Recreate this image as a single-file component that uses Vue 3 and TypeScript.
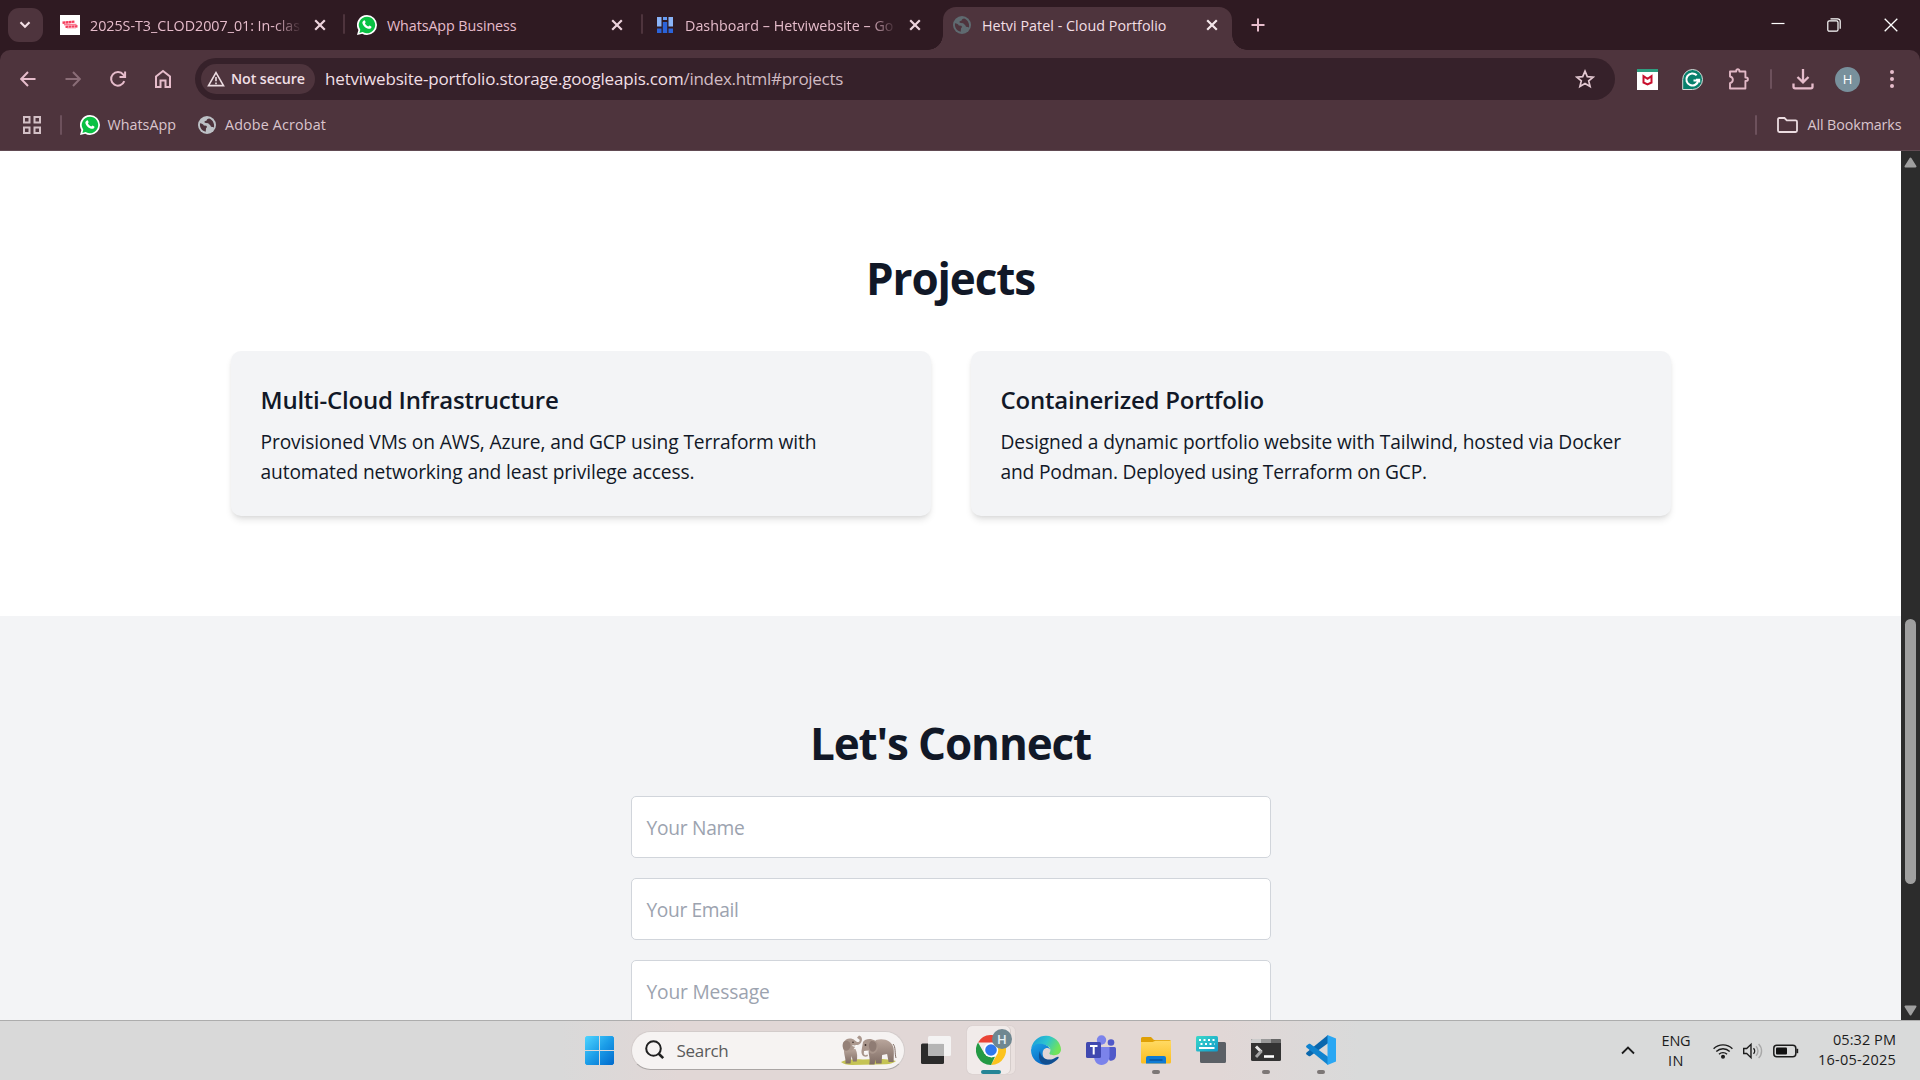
<script setup lang="ts">
import type { Directive } from 'vue'

interface Project {
  title: string
  titleWidth: number
  lines: { text: string; width: number }[]
}

const projects: Project[] = [
  {
    title: 'Multi-Cloud Infrastructure',
    titleWidth: 298,
    lines: [
      { text: 'Provisioned VMs on AWS, Azure, and GCP using Terraform with', width: 556 },
      { text: 'automated networking and least privilege access.', width: 434 },
    ],
  },
  {
    title: 'Containerized Portfolio',
    titleWidth: 263.5,
    lines: [
      { text: 'Designed a dynamic portfolio website with Tailwind, hosted via Docker', width: 620.5 },
      { text: 'and Podman. Deployed using Terraform on GCP.', width: 426.5 },
    ],
  },
]

const fields = [
  { label: 'Your Name', width: 98 },
  { label: 'Your Email', width: 92 },
  { label: 'Your Message', width: 123 },
]

// Tracks a line of text so that it spans the given width in pixels.
const vFit: Directive<HTMLElement, number> = {
  mounted(el, { value }) {
    const natural = el.getBoundingClientRect().width
    const count = (el.textContent ?? '').trim().length
    if (count) el.style.letterSpacing = `${(value - natural) / count}px`
  },
}
</script>

<template>
  <div class="screen">
    <!-- Tab strip -->
    <header class="tabs">
      <button class="tab-search">
        <svg width="12" height="8" viewBox="0 0 12 8"><path d="M1.500 1.200 6 5.700l4.500-4.500" fill="none" stroke="#f3dfe5" stroke-width="2.200" /></svg>
      </button>
      <div class="tab">
        <svg class="fav" width="20" height="20" viewBox="0 0 20 20">
          <rect width="20" height="20" fill="#fff" />
          <path d="M2.500 7.800 14.500 6.600M5.500 11.900l12-.6" stroke="#f43f5e" stroke-width="2.400" stroke-dasharray="2.700 .4" fill="none" />
          <path d="M4 9.600h12.500" stroke="#fb7c93" stroke-width="1.600" /><path d="M7 13.100h9" stroke="#fda4b4" stroke-width=".8" />
        </svg>
        <div class="title clip"><span v-fit="210" class="t">2025S-T3_CLOD2007_01: In-clas</span></div>
        <svg class="x" width="12" height="12" viewBox="0 0 12 12"><path d="m1.200 1.200 9.600 9.600m0-9.600-9.600 9.600" /></svg>
        <i class="tab-sep"></i>
      </div>
      <div class="tab">
        <svg class="fav wa" width="20" height="20" viewBox="0 0 20 20"><use href="#wa" /></svg>
        <div class="title"><span v-fit="129.500" class="t">WhatsApp Business</span></div>
        <svg class="x" width="12" height="12" viewBox="0 0 12 12"><path d="m1.200 1.200 9.600 9.600m0-9.600-9.600 9.600" /></svg>
        <i class="tab-sep"></i>
      </div>
      <div class="tab">
        <svg class="fav" width="20" height="20" viewBox="0 0 20 20">
          <path d="M2 2h4.500v9.500H2zM13.500 2H18v9.500h-4.500z" fill="#8ab4f8" /><path d="M8 2h4v3H8z" fill="#669df6" />
          <path d="M7.800 7h4.400v11H7.800zM2 13.500h4.500V18H2zM13.500 13.500H18V18h-4.500z" fill="#2b63d9" />
        </svg>
        <div class="title clip"><span v-fit="208.500" class="t">Dashboard – Hetviwebsite – Go</span></div>
        <svg class="x" width="12" height="12" viewBox="0 0 12 12"><path d="m1.200 1.200 9.600 9.600m0-9.600-9.600 9.600" /></svg>
      </div>
      <div class="tab active">
        <svg class="fav" width="20" height="20" viewBox="0 0 20 20" color="#5f6a70"><use href="#globe" /></svg>
        <div class="title"><span v-fit="184.500" class="t">Hetvi Patel - Cloud Portfolio</span></div>
        <svg class="x" width="12" height="12" viewBox="0 0 12 12"><path d="m1.200 1.200 9.600 9.600m0-9.600-9.600 9.600" /></svg>
      </div>
      <svg class="plus" width="14" height="14" viewBox="0 0 14 14"><path d="M7 .5v13M.5 7h13" stroke="#e6bccb" stroke-width="2" /></svg>
      <div class="win">
        <svg width="14" height="14" viewBox="0 0 14 14"><path d="M.5 5.500h13" stroke="#fff" stroke-width="1.200" /></svg>
        <svg width="14" height="14" viewBox="0 0 14 14" fill="none" stroke="#fff" stroke-width="1.200"><rect x=".8" y="2.800" width="10.200" height="10.400" rx="1.500" /><path d="M3.500.8h7.200a2.500 2.500 0 0 1 2.500 2.500v7.500" /></svg>
        <svg width="14" height="14" viewBox="0 0 14 14"><path d="m.7.7 12.600 12.600m0-12.600L.7 13.300" stroke="#fff" stroke-width="1.300" /></svg>
      </div>
    </header>

    <!-- Address bar and bookmarks -->
    <section class="chrome">
      <div class="toolbar">
        <nav class="nav">
          <svg width="16" height="16" viewBox="0 0 16 16"><path d="M15.500 8H1.500M8 1 1.200 8 8 15" /></svg>
          <svg class="dim" width="16" height="16" viewBox="0 0 16 16"><path d="M.5 8h14M8 1l6.800 7L8 15" /></svg>
          <svg width="18" height="18" viewBox="0 0 18 18"><path d="M15.300 11.200A6.800 6.800 0 1 1 14.300 4.700L16 6.700M16.100 1.500v5.600h-5.600" /></svg>
          <svg width="18" height="20" viewBox="0 0 18 20"><path d="M2 7.500 9 2l7 5.500V18h-4.500v-6.500h-5V18H2z" /></svg>
        </nav>
        <div class="omnibox">
          <div class="chip">
            <svg width="18" height="16" viewBox="0 0 18 16"><path d="M9 1.700 16.500 14.600h-15z" fill="none" stroke="#ecdce1" stroke-width="1.600" /><path d="M9 6v4.300M9 11.500v1.700" stroke="#ecdce1" stroke-width="1.600" /></svg>
            <span v-fit="74" class="t secure">Not secure</span>
          </div>
          <div class="url"><span v-fit="358.500" class="t host">hetviwebsite-portfolio.storage.googleapis.com</span><span v-fit="159.500" class="t path">/index.html#projects</span></div>
          <svg class="star" width="20" height="20" viewBox="0 0 20 20"><path d="m10 2.200 2.300 5.400 5.900.5-4.500 3.800 1.400 5.700L10 14.600l-5.100 3 1.400-5.700-4.500-3.800 5.900-.5z" fill="none" stroke="#e3c8d1" stroke-width="1.700" /></svg>
        </div>
        <div class="ext">
          <svg width="21" height="21" viewBox="0 0 21 21"><rect width="21" height="21" fill="#fff" /><path d="M0 0h21v3H0z" fill="#2e9e80" /><path d="M6.500 7.200v6.300l4 1.800 4-1.800V7.200l-4 2.600z" fill="none" stroke="#c8102e" stroke-width="2" /></svg>
          <svg width="21" height="21" viewBox="0 0 21 21"><path d="M10.500.5a10 10 0 1 1 0 20H.7v-10a10 10 0 0 1 9.800-10z" fill="#07806c" stroke="#d6dcd9" /><path d="M14.700 6.300a6 6 0 1 0 1.600 5.200h-4.800" fill="none" stroke="#fff" stroke-width="2.100" /><path d="M14 10.500h3.400v3" fill="none" stroke="#fff" stroke-width="1.600" /></svg>
          <svg width="22" height="22" viewBox="0 0 22 22"><path d="M2 3.500h6.200v-.7a1.600 1.600 0 0 1 3.200 0v.7h6v6h.8a1.700 1.700 0 0 1 0 3.400h-.8v7.600H2v-5.400c3.800-.8 3.800-5.800 0-6.600z" fill="none" stroke="#e2b8c6" stroke-width="1.900" stroke-linejoin="round" /></svg>
          <i class="sep"></i>
          <svg width="22" height="22" viewBox="0 0 22 22"><path d="M11 1v13M5.500 9 11 14.300 16.500 9M1.500 15.500v3.200a1.600 1.600 0 0 0 1.600 1.600h15.800a1.600 1.600 0 0 0 1.600-1.600v-3.200" fill="none" stroke="#e6bccb" stroke-width="2.300" /></svg>
          <span class="avatar">H</span>
          <svg width="4" height="20" viewBox="0 0 4 20" fill="#e6bccb"><circle cx="2" cy="3" r="2" /><circle cx="2" cy="10" r="2" /><circle cx="2" cy="17" r="2" /></svg>
        </div>
      </div>
      <div class="bookmarks">
        <svg class="apps" width="18" height="18" viewBox="0 0 18 18" fill="none" stroke="#d3c0c6" stroke-width="2"><path d="M1 1h5.500v5.500H1zM11.500 1H17v5.500h-5.500zM1 11.500h5.500V17H1zM11.500 11.500H17V17h-5.500z" /></svg>
        <i class="sep"></i>
        <svg class="b-wa" width="20" height="20" viewBox="0 0 20 20">
          <g id="wa"><path d="M10 0a10 10 0 0 1 0 20 10 10 0 0 1-4.800-1.200L0 20l1.400-4.900A10 10 0 0 1 10 0z" fill="#fff" /><path d="M10 1.700a8.300 8.300 0 1 1-4.400 15.400l-3.200.8.9-3.100A8.300 8.300 0 0 1 10 1.700z" fill="#0ac143" /><path d="M6.900 5.400c.5-.4 1 0 1.200.5l.5 1.200c.2.500-.6 1-.6 1.300.7 1.400 1.900 2.500 3.300 3.100.4 0 .9-1 1.400-.9l1.500.8c.5.3.3 1-.1 1.500-1 1.200-2.400 1.100-3.700.6-2.300-.8-4.300-2.800-5-5.200-.3-1.200.5-2.200 1.500-2.900z" fill="#fff" /></g>
        </svg>
        <span v-fit="68.500" class="t">WhatsApp</span>
        <svg class="b-globe" width="20" height="20" viewBox="0 0 20 20" color="#bdc1c6">
          <g id="globe"><circle cx="10" cy="10" r="9" fill="currentColor" /><path d="M3 8.300c1.800.1 3.200.9 3.800 2.100l2.500.3c.9.500.8 1.900-.2 2.400l-.4 3.600c-3.500-.5-6.300-3.800-5.700-8.400zM12.300 3.400c-1.800.2-2.800 1-2.600 2.200l-2 .7c-.6.900 0 1.700 1.200 1.700l2.300.2c.8 1.100 2 1.300 2.200 2.400.2 1 .9 1.500 1.900 1.300 1-.1 1.400.3 1.400 1.200 1.300-3.600-.4-8-4.400-9.700z" fill="#4e343d" /></g>
        </svg>
        <span v-fit="101" class="t">Adobe Acrobat</span>
        <i class="sep push"></i>
        <svg class="folder" width="21" height="16" viewBox="0 0 21 16"><path d="M1 2.500A1.400 1.400 0 0 1 2.400 1h5.100l2.300 2.300h8.800A1.400 1.400 0 0 1 20 4.700v8.900a1.400 1.400 0 0 1-1.400 1.400H2.400A1.400 1.400 0 0 1 1 13.600z" fill="none" stroke="#ecdce1" stroke-width="1.800" /></svg>
        <span v-fit="94" class="t">All Bookmarks</span>
      </div>
    </section>

    <!-- Web page -->
    <div class="view">
      <main class="page">
        <section class="projects">
          <h2><span v-fit="169" class="t">Projects</span></h2>
          <div class="cards">
            <article v-for="p in projects" :key="p.title" class="card">
              <h3><span v-fit="p.titleWidth" class="t">{{ p.title }}</span></h3>
              <p v-for="l in p.lines" :key="l.text"><span v-fit="l.width" class="t">{{ l.text }}</span></p>
            </article>
          </div>
        </section>
        <section class="contact">
          <h2><span v-fit="281" class="t">Let's Connect</span></h2>
          <form>
            <div v-for="f in fields" :key="f.label" class="field"><span v-fit="f.width" class="t">{{ f.label }}</span></div>
          </form>
        </section>
      </main>
      <aside class="scroll">
        <svg width="13" height="11" viewBox="0 0 13 11"><path d="M6.500 1.500 11.500 9.500h-10z" fill="#9f9f9f" stroke="#9f9f9f" stroke-width="2" stroke-linejoin="round" /></svg>
        <div class="thumb"></div>
        <svg class="down" width="13" height="11" viewBox="0 0 13 11"><path d="M6.500 9.500 1.500 1.500h10z" fill="#9f9f9f" stroke="#9f9f9f" stroke-width="2" stroke-linejoin="round" /></svg>
      </aside>
    </div>

    <!-- Windows taskbar -->
    <footer class="taskbar">
      <div class="dock">
        <svg class="start" width="29" height="29" viewBox="0 0 29 29">
          <defs><linearGradient id="win" x1="0" y1="0" x2="29" y2="29" gradientUnits="userSpaceOnUse"><stop stop-color="#4fd5ff" /><stop offset=".5" stop-color="#1b9de8" /><stop offset="1" stop-color="#0069cc" /></linearGradient></defs>
          <path d="M1.500 0H14v14H0V1.500zM15 0h12.500L29 1.500V14H15zM0 15h14v14H1.500L0 27.500zM15 15h14v12.500L27.500 29H15z" fill="url(#win)" />
        </svg>
        <div class="search">
          <svg class="lens" width="20" height="20" viewBox="0 0 20 20"><circle cx="8.500" cy="8.500" r="7.300" fill="none" stroke="#202020" stroke-width="2" /><path d="m13.500 13.500 4.700 4.700" stroke="#202020" stroke-width="2.600" /></svg>
          <span v-fit="52" class="t">Search</span>
          <svg class="elephants" width="57" height="32" viewBox="0 0 57 32">
            <defs><linearGradient id="ele" x1="0" y1="0" x2="0" y2="1"><stop stop-color="#b9a69c" /><stop offset="1" stop-color="#7f6c64" /></linearGradient></defs>
            <path d="M1 28c5-3 14-3 22-2.500 12-.8 25-1 33 1.500-2 2-6 3-10 3.300L12 31C7 31 3 30 1 28z" fill="#c5c455" />
            <path d="M4 15h11.500c2 4 2 8 1.200 12.500H13L11.500 22l-1 7.500H5.500C6 24 3.500 20 4 15z" fill="url(#ele)" />
            <path d="M3.500 9C5 5 9 3.700 12.500 5c1.800.7 3.300 2 4.500 3 2 .2 3-.8 2.600-2.300L17 3.700 19 1.500c3.600.9 3.800 5.600 1.300 8-1.400 1.400-3 1.700-4.700 1.500-.5 2.500-1.800 4.500-3.800 5.500H4C2.800 14 2.700 11.500 3.500 9z" fill="#ab988e" />
            <path d="M4 7.500c3.500-2 7 .5 6.500 5-.6 3-4 5.500-6.300 3.500C2 13.500 2.200 9.500 4 7.500z" fill="#958178" />
            <path d="M36 6c8-2.500 16 1 17.500 8 .6 4 .3 8 .1 14h-5l-1.500-8-5 1-.5 8.500H36l-.5-4-1 5h-5.300c1.500-6-1-10-.5-14z" fill="url(#ele)" />
            <path d="M53 10c3 3 1.500 9 3 14" fill="none" stroke="#836f67" />
            <path d="M23 8c2-3.600 8-4 12-1.500 5 3 4 9 .5 12-3 2.600-6 1-6.500-2l-3.500.3c-2.500 1.200-2 4 0 4.500l2-.8.500 1.600c-4 2-7-1-6.500-5.300z" fill="#a9968c" />
            <path d="M31 7c5-.5 7 4 4.500 9-2 3-5 2-6-1s-1-6 1.500-8z" fill="#8f7c74" />
            <path d="M12.500 11.500c2 1 3.500.8 4.500 0M24 17.500l3 .5" stroke="#fff" stroke-width="1.200" fill="none" /><circle cx="13" cy="8.200" r=".8" fill="#3e302c" /><circle cx="25.500" cy="11" r=".9" fill="#3e302c" />
          </svg>
        </div>
        <svg class="taskview" width="30" height="28" viewBox="0 0 30 28"><rect y="7.500" width="23" height="20.500" rx="1.500" fill="#2b2b2b" /><rect x="7" width="23" height="20" rx="1.500" fill="#f5f5f5" opacity=".92" /><path d="M7 8h16v12H8.500A1.500 1.500 0 0 1 7 18.500z" fill="#b5b5b5" /></svg>
        <div class="app open">
          <svg width="30" height="30" viewBox="0 0 30 30">
            <path d="M2 7.500A15 15 0 0 1 28 7.500H15z" fill="#ea4335" /><path d="M2 7.500 8.500 18.700 15 22.500 15 30A15 15 0 0 1 2 7.500z" fill="#249a45" /><path d="M28 7.500A15 15 0 0 1 15 30L21.500 18.700 19 7.500z" fill="#fcc31e" /><path d="m8.500 18.700 6.500 3.800 4-.8L15 30z" fill="#249a45" />
            <circle cx="15" cy="15" r="7.300" fill="#fff" /><circle cx="15" cy="15" r="5.800" fill="#2f78ee" />
          </svg>
          <span class="badge">H</span><i class="run on"></i>
        </div>
        <div class="app">
          <svg width="30" height="30" viewBox="0 0 30 30">
            <defs><linearGradient id="e1" x1="0" y1="0" x2="1" y2=".4"><stop stop-color="#1997dc" /><stop offset=".55" stop-color="#2dc4cf" /><stop offset="1" stop-color="#71e35a" /></linearGradient><linearGradient id="e2" x1="0" y1="0" x2=".5" y2="1"><stop stop-color="#1da5e7" /><stop offset="1" stop-color="#0867c4" /></linearGradient></defs>
            <path d="M.2 13.500A15 15 0 0 1 30 14.500c0 3.500-3 5.700-6.500 5.700-3 0-5.600-1-5-2.300 1.700-2 1-5-1-6.400C12 8 3 8.500.2 13.500z" fill="url(#e1)" />
            <path d="M0 15C1 9.500 6.500 8 11.500 9c4 .8 7 3 7.500 5.500-1-2-4.500-2.400-6.400.3C9.500 20 14 27 21 28.500 12 32.500 0 27 0 15z" fill="url(#e2)" />
            <path d="M9 16c0 6.500 7 10 13 8 2.500-1 4.500-2.600 5.500-2 .7.500-.5 2-2 3.300C19.500 31 10.500 31.500 8.300 24 7.500 21 8 18 9 16z" fill="#104f91" />
          </svg>
        </div>
        <div class="app">
          <svg width="30" height="30" viewBox="0 0 30 30">
            <circle cx="25" cy="7.500" r="3.300" fill="#5059c9" /><path d="M19 12h9.500A1.500 1.500 0 0 1 30 13.500V20c0 4-3 6.500-6.500 5.500z" fill="#5059c9" /><circle cx="15.500" cy="5" r="4.700" fill="#7b83eb" /><path d="M8 12h15.500v9c0 5-3.500 9-8 9s-7.500-4-7.500-9z" fill="#7b83eb" /><rect y="7" width="15" height="16" rx="1.500" fill="#4048b0" /><path d="M4 11h7.500M7.700 11v8.500" stroke="#fff" stroke-width="2" />
          </svg>
        </div>
        <div class="app">
          <svg width="30" height="30" viewBox="0 0 30 30">
            <defs><linearGradient id="fo" x1="0" y1="0" x2="0" y2="1"><stop stop-color="#ffda64" /><stop offset="1" stop-color="#fbbd1f" /></linearGradient></defs>
            <path d="M0 3.500A1.500 1.500 0 0 1 1.500 2H10l3 3h15.500A1.500 1.500 0 0 1 30 6.500V9H0z" fill="#dfa006" /><path d="M0 7h11.500l3-1.200H30V27a1.500 1.500 0 0 1-1.500 1.500h-27A1.500 1.500 0 0 1 0 27z" fill="url(#fo)" /><path d="M5 28.500V23a2 2 0 0 1 2-2h16a2 2 0 0 1 2 2v5.500z" fill="#0f7bd4" /><path d="M8.500 25h13" stroke="#064b91" stroke-width="1.200" />
          </svg>
          <i class="run"></i>
        </div>
        <div class="app">
          <svg width="30" height="30" viewBox="0 0 30 30">
            <defs><linearGradient id="kb" x1="0" y1="0" x2="1" y2="1"><stop stop-color="#3ad9c9" /><stop offset="1" stop-color="#129acb" /></linearGradient></defs>
            <path d="M4 7h24.500A1.500 1.500 0 0 1 30 8.500v18a1.500 1.500 0 0 1-1.500 1.500h-23A1.500 1.500 0 0 1 4 26.500z" fill="#5b6066" /><rect y="1" width="22" height="15.500" rx="1.500" fill="url(#kb)" /><path d="M3 5h16M4.500 9h14" stroke="#fff" stroke-width="2" stroke-dasharray="2 2.500" /><path d="M3 13h15.500" stroke="#fff" stroke-width="2" />
          </svg>
        </div>
        <div class="app">
          <svg width="30" height="30" viewBox="0 0 30 30">
            <rect y="4" width="30" height="22" rx="1.500" fill="#333" /><path d="M0 8V5.500A1.500 1.500 0 0 1 1.500 4H10v4z" fill="#ccc" /><path d="M10 4h10v4H10z" fill="#999" /><path d="M20 4h8.500A1.500 1.500 0 0 1 30 5.500V8H20z" fill="#666" /><path d="m5 11.500 5.500 5.500" stroke="#e6e6e6" stroke-width="3" /><path d="M10.500 16 5 22" stroke="#a6a6a6" stroke-width="3" /><path d="M13 21.500h10" stroke="#fff" stroke-width="2.600" />
          </svg>
          <i class="run"></i>
        </div>
        <div class="app">
          <svg width="30" height="30" viewBox="0 0 30 30">
            <path d="M22 0 0.600 17.400c-.7.600-.7 1.400 0 2l2 1.500c.6.400 1.200.4 1.800 0L22 8.200z" fill="#0a67ad" /><path d="M22 30 .6 12.600c-.7-.6-.7-1.400 0-2l2-1.500c.6-.4 1.200-.4 1.800 0L22 21.800z" fill="#1083cf" /><path d="M21.500 0 30 3.500v23L21.500 30z" fill="#2aa7f3" />
          </svg>
          <i class="run"></i>
        </div>
      </div>
      <div class="tray">
        <svg class="chev" width="14" height="9" viewBox="0 0 14 9"><path d="M1 7.500 7 1.600l6 5.900" fill="none" stroke="#1c1c1c" stroke-width="1.800" /></svg>
        <div class="two lang"><span v-fit="29" class="t">ENG</span><span v-fit="16" class="t">IN</span></div>
        <svg class="wifi" width="20" height="16" viewBox="0 0 20 16" fill="none" stroke="#1c1c1c" stroke-width="1.400"><path d="M.6 5.800a13.200 13.200 0 0 1 18.800 0M3.300 8.600a9.400 9.400 0 0 1 13.400 0M6 11.300a5.600 5.600 0 0 1 8 0" /><circle cx="10" cy="13.800" r="1.300" fill="#1c1c1c" /></svg>
        <svg class="vol" width="20" height="18" viewBox="0 0 20 18" fill="none" stroke="#1c1c1c" stroke-width="1.400"><path d="M.7 6.500h3L8 2.300v13.400l-4.300-4.200h-3zM10.500 6.200a4 4 0 0 1 0 5.600" /><path d="M13 4.200a6.800 6.800 0 0 1 0 9.600M15.600 1.900a10 10 0 0 1 0 14.200" stroke="#a8a8a8" /></svg>
        <svg class="bat" width="26" height="14" viewBox="0 0 26 14"><rect x=".8" y="1.300" width="22" height="11.400" rx="3" fill="none" stroke="#1c1c1c" stroke-width="1.500" /><rect x="3" y="3.500" width="11" height="7" rx="1" fill="#111" /><path d="M24.300 4.800v4.400" stroke="#1c1c1c" stroke-width="1.800" /></svg>
        <div class="two clock"><span v-fit="63" class="t">05:32 PM</span><span v-fit="78" class="t">16-05-2025</span></div>
      </div>
    </footer>
  </div>
</template>

<style>
html, body { margin: 0; overflow: hidden; }
</style>

<style scoped>
.screen { display: flex; flex-direction: column; width: 1920px; height: 1080px; overflow: hidden; box-sizing: border-box; background: linear-gradient(#2f1a22 0 70px, #fff 70px); font-family: "Open Sans", "Noto Sans", sans-serif; color: #111827; }
svg { display: block; flex: none; }
.t { display: inline-block; white-space: pre; }

/* Tab strip */
.tabs { display: flex; height: 50px; background: #2f1a22; flex: none; font-size: 14.300px; color: #e6bccb; }
.tab-search { width: 35px; height: 34px; margin: 8px 7px 0 8px; padding: 0 1px 0 0; box-sizing: border-box; border: 0; border-radius: 11px; background: #4e343d; display: flex; align-items: center; justify-content: center; flex: none; }
.tab { width: 289.500px; margin-right: 8px; display: flex; align-items: center; position: relative; flex: none; height: 50px; }
.fav { margin-left: 10px; }
.wa { margin-left: 9.500px; }
.title { width: 211px; margin-left: 10px; padding-top: 1px; line-height: 20px; flex: none; }
.title.clip { mask-image: linear-gradient(90deg, #000 184px, transparent 212px); }
.x { margin-left: 12.500px; fill: none; stroke: #ecd3dc; stroke-width: 2.200; }
.wa ~ .x { margin-left: 13px; }
.tab-sep { position: absolute; left: 293px; top: 14px; width: 2px; height: 20px; border-radius: 1px; background: #4e343d; }
.active { height: 43px; margin-top: 7px; background: #4e343d; border-radius: 13px 13px 0 0; color: #f3dfe5; }
.active .fav, .active .title, .active .x { margin-top: -7px; }
.active .x { stroke: #f3e6ea; }
.active .fav { margin-left: 9.500px; }
.active .x { margin-left: 13px; }
.active::before, .active::after { content: ""; position: absolute; bottom: 0; width: 15px; height: 15px; }
.active::before { left: -15px; background: radial-gradient(circle at 0 0, transparent 14.500px, #4e343d 15px); }
.active::after { right: -15px; background: radial-gradient(circle at 100% 0, transparent 14.500px, #4e343d 15px); }
.plus { margin: 18px 0 0 10.500px; }
.win { display: flex; gap: 43.500px; margin: 18px 22px 0 auto; }
.win svg:first-child { margin-right: -1.500px; }

/* Toolbar */
.chrome { height: 101px; flex: none; box-sizing: border-box; background: #4e343d; border-bottom: 1px solid #614a52; border-radius: 10px 10px 0 0; }
.toolbar { display: flex; align-items: center; height: 58px; }
.nav { display: flex; align-items: center; width: 195px; padding-left: 20px; gap: 29px; box-sizing: border-box; fill: none; stroke: #e6bccb; stroke-width: 2; }
.nav .dim { stroke: #8a6d77; }
.nav svg:nth-child(3) { margin-left: -1px; }
.nav svg:nth-child(4) { margin-left: -2px; }
.omnibox { width: 1420px; height: 42px; border-radius: 21px; background: #36212a; display: flex; align-items: center; box-sizing: border-box; padding: 0 20px 0 6px; }
.chip { width: 114px; height: 30px; border-radius: 15px; background: #4e343d; display: flex; align-items: center; box-sizing: border-box; padding-left: 6px; gap: 6px; flex: none; }
.secure { font-size: 14.300px; font-weight: 600; color: #f0dfe4; line-height: 28px; padding-bottom: 1px; }
.url { margin-left: 10px; font-size: 17px; line-height: 24px; white-space: nowrap; display: flex; }
.host { color: #f0dfe4; }
.path { color: #d1bbc3; }
.star { margin-left: auto; }
.ext { display: flex; align-items: center; flex: 1; padding-left: 22px; }
.ext > svg:nth-child(2) { margin-left: 24px; }
.ext > svg:nth-child(3) { margin: 0 0 1px 24.500px; }
.ext > .sep { margin-left: 20.500px; }
.ext > svg:nth-child(5) { margin-left: 19.500px; }
.avatar { width: 25px; height: 25px; margin: 0 30px 0 21.500px; border-radius: 50%; background: #78909c; color: #fff; font-size: 13px; line-height: 25px; text-align: center; }
.sep { width: 2px; height: 20px; border-radius: 1px; background: #6d515c; flex: none; }
.bookmarks { display: flex; align-items: center; height: 34px; font-size: 14.300px; line-height: 20px; color: #dbc5cd; }
.apps { margin: 0 19px 0 23px; }
.b-wa { margin: 0 8px 0 17.500px; }
.b-globe { margin: 0 8px 0 21px; }
.push { margin-left: auto; }
.folder { margin: 0 10px 0 20px; }
.bookmarks .t:last-child { margin-right: 18.500px; }

/* Page */
.view { display: flex; height: 869px; flex: none; }
.page { width: 1901px; overflow: hidden; background: #fff; }
.projects, .contact { box-sizing: border-box; padding-top: 100px; }
.projects { height: 465px; }
.contact { height: 500px; background: #f3f4f6; }
h2 { margin: 0; height: 50px; box-sizing: border-box; padding-top: 2px; font-size: 44px; line-height: 50px; font-weight: 700; text-align: center; }
.cards { display: flex; gap: 40px; width: 1440px; margin: 50px auto 0; }
.card { flex: 1; height: 165px; box-sizing: border-box; padding: 31px 30px 0; border-radius: 10px; background: #f3f4f6; box-shadow: 0 5px 7px -1px rgba(0, 0, 0, .1), 0 2px 5px -2px rgba(0, 0, 0, .1); }
h3 { margin: 0 0 10px; font-size: 24px; line-height: 35px; font-weight: 600; }
p { margin: 0; font-size: 19.200px; line-height: 30px; height: 30px; }
form { width: 640px; margin: 30px auto 0; display: flex; flex-direction: column; gap: 20px; }
.field { height: 62px; box-sizing: border-box; border: 1px solid #d1d5db; border-radius: 5px; background: #fff; padding: 16px 15px 0; font-size: 19.200px; line-height: 30px; color: #9ca3af; }
.field:last-child { height: 142px; }
.scroll { width: 19px; background: #2c2c2c; display: flex; flex-direction: column; align-items: center; padding-top: 6px; box-sizing: border-box; }
.thumb { width: 11px; height: 265px; margin-top: 451px; border-radius: 6px; background: #9f9f9f; }
.down { margin: auto 0 4px; }

/* Taskbar */
.taskbar { height: 60px; flex: none; box-sizing: border-box; border-top: 1px solid #adadad; background: linear-gradient(90deg, #d9d9d9 0 560px, #e1d7d6 680px 1220px, #d9dada 1360px); display: flex; color: #1c1c1c; }
.dock { width: 1345px; padding-left: 585px; box-sizing: border-box; display: flex; align-items: center; height: 58px; flex: none; }
.search { width: 274px; height: 39px; margin-left: 17px; box-sizing: border-box; border: 1px solid #d3cccb; border-bottom-color: #aaa5a4; border-radius: 20px; background: #f6f3f2; display: flex; align-items: center; padding-left: 13px; font-size: 17px; color: #5a5a5a; flex: none; }
.search .t { margin-left: 11.500px; line-height: 24px; padding-top: 1px; }
.elephants { margin-left: auto; margin-right: 7px; }
.taskview { margin: 0 16px; }
.app { position: relative; width: 48px; height: 48px; margin-right: 7px; display: flex; align-items: center; justify-content: center; flex: none; }
.app.open { background: #f1ebea; border-radius: 5px; box-shadow: inset -4px 0 0 #eae1df, inset -5px 0 0 #d5cdcb, 0 0 1px #b5adab; }
.badge { position: absolute; left: 25px; top: 3px; width: 20px; height: 20px; border-radius: 50%; background: #6f8791; color: #e4eef2; font-size: 13px; font-weight: 600; line-height: 20px; text-align: center; }
.run { position: absolute; left: 20px; bottom: 0; width: 8px; height: 4px; border-radius: 2px; background: #7c7776; }
.run.on { left: 14px; width: 20px; background: #258596; }
.tray { flex: 1; display: flex; align-items: center; font-size: 14.500px; }
.chev { margin-left: 276px; }
.two { display: flex; flex-direction: column; line-height: 20px; }
.lang { width: 30px; margin-left: 26px; align-items: center; }
.wifi { margin-left: 22px; }
.vol { margin-left: 10px; }
.bat { margin-left: 10px; }
.clock { margin: 0 24px 2px auto; align-items: flex-end; }
</style>
